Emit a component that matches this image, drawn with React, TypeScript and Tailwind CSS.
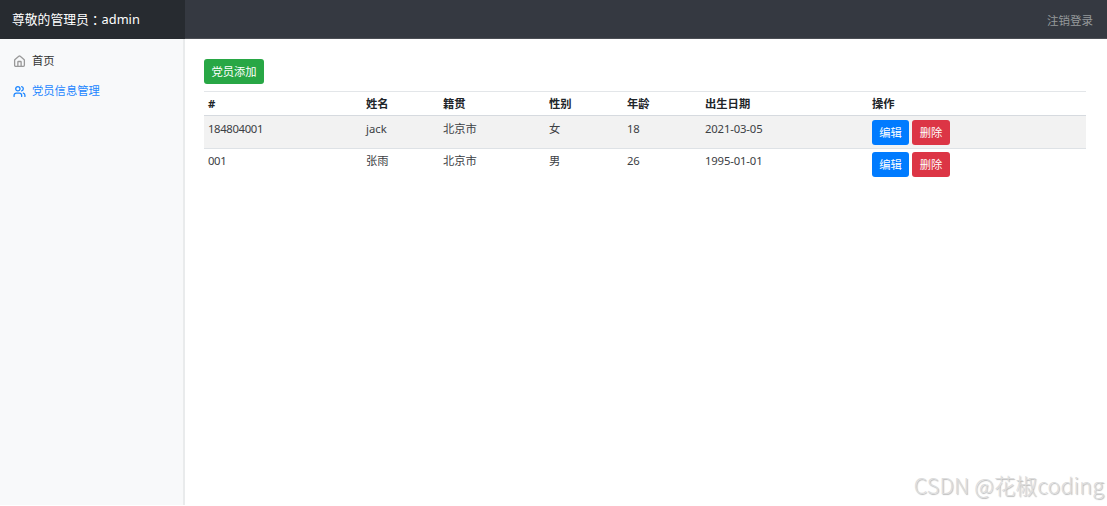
import { House, Users } from 'lucide-react';

interface Member {
  id: string;
  name: string;
  origin: string;
  gender: string;
  age: number;
  birthday: string;
}

const MEMBERS: Member[] = [
  { id: '184804001', name: 'jack', origin: '北京市', gender: '女', age: 18, birthday: '2021-03-05' },
  { id: '001', name: '张雨', origin: '北京市', gender: '男', age: 26, birthday: '1995-01-01' },
];

const COLUMNS = [
  { title: '#', width: 'w-[158px]' },
  { title: '姓名', width: 'w-[77px]' },
  { title: '籍贯', width: 'w-[106px]' },
  { title: '性别', width: 'w-[78px]' },
  { title: '年龄', width: 'w-[78px]' },
  { title: '出生日期', width: 'w-[167px]' },
  { title: '操作', width: 'w-[218px]' },
];

function Navbar() {
  return (
    <nav className="flex h-[39px] items-center justify-between border-b border-[#4b4e54] bg-[#353941]">
      <a href="#" className="flex h-[39px] w-[185px] items-center bg-[#272b30] pl-3 pt-px text-[12.8px] text-white">
        尊敬的管理员<span className="font-['Noto_Sans_CJK_TC',sans-serif]" lang="zh-TW">：</span>admin
      </a>
      <a href="#" className="pr-[14px] pt-0.5 text-[11.5px] text-[#96999c]">注销登录</a>
    </nav>
  );
}

function Sidebar() {
  return (
    <aside className="mb-px w-[185px] shrink-0 border-r-2 border-[#e9ebec] bg-[#f8f9fa]">
      <ul className="pt-1.5">
        <li>
          <a href="#" className="flex h-[30px] items-center gap-1.5 pl-[13px] text-[#333]">
            <House className="mt-0.5 size-[13px]" color="#999" strokeWidth={2.4} />
            首页
          </a>
        </li>
        <li>
          <a href="#" className="flex h-[30px] items-center gap-1.5 pl-[13px] text-[#1c86ff]">
            <Users className="mt-0.5 size-[13px]" strokeWidth={2.4} />
            党员信息管理
          </a>
        </li>
      </ul>
    </aside>
  );
}

function MemberTable() {
  return (
    <table className="mt-[7px] w-[882px] table-fixed border-separate border-spacing-0 text-left">
      <thead>
        <tr>
          {COLUMNS.map(c => (
            <th key={c.title} className={`${c.width} h-[25px] border-t border-b border-t-[#e3e6e9] border-b-[#d6dadf] p-0 px-1 font-bold text-[#212529]`}>{c.title}</th>
          ))}
        </tr>
      </thead>
      <tbody>
        {MEMBERS.map(m => (
          <tr key={m.id} className="align-top text-[#3c4044] odd:bg-[#f2f2f2] odd:[&>td]:border-b odd:[&>td]:border-[#dee2e6] odd:[&>td]:pt-1 even:[&>td]:pt-[3px] [&>td]:h-[33px] [&>td]:px-1">
            <td className="tracking-[-0.35px]">{m.id}</td>
            <td>{m.name}</td>
            <td>{m.origin}</td>
            <td>{m.gender}</td>
            <td className="tracking-[-0.2px]">{m.age}</td>
            <td className="tracking-[-0.15px]">{m.birthday}</td>
            <td>
              <div className="flex gap-[3px]">
                <button className="h-[25px] w-[37px] rounded-[3px] bg-[#007bff] text-white">编辑</button>
                <button className="h-[25px] w-[38px] rounded-[3px] bg-[#dc3545] text-white">删除</button>
              </div>
            </td>
          </tr>
        ))}
      </tbody>
    </table>
  );
}

export default function App() {
  return (
    <div className="relative flex h-[506px] w-[1107px] flex-col overflow-hidden bg-white font-['Noto_Sans','Noto_Sans_CJK_SC',sans-serif] text-[11.3px] leading-[17px]">
      <Navbar />
      <div className="flex flex-1">
        <Sidebar />
        <main className="flex-1 pl-[19px] pt-5">
          <button className="block h-[25px] w-[60px] rounded-[3px] bg-[#28a745] text-white">党员添加</button>
          <MemberTable />
        </main>
      </div>
      <span className="absolute right-[3px] bottom-[6px] font-['Noto_Sans_CJK_SC',sans-serif] text-[21.4px] leading-[30px] font-light tracking-[0.2px] whitespace-nowrap text-[#ddd] [text-shadow:1px_1px_1px_#bbb]">
        CSDN @花椒coding
      </span>
    </div>
  );
}
